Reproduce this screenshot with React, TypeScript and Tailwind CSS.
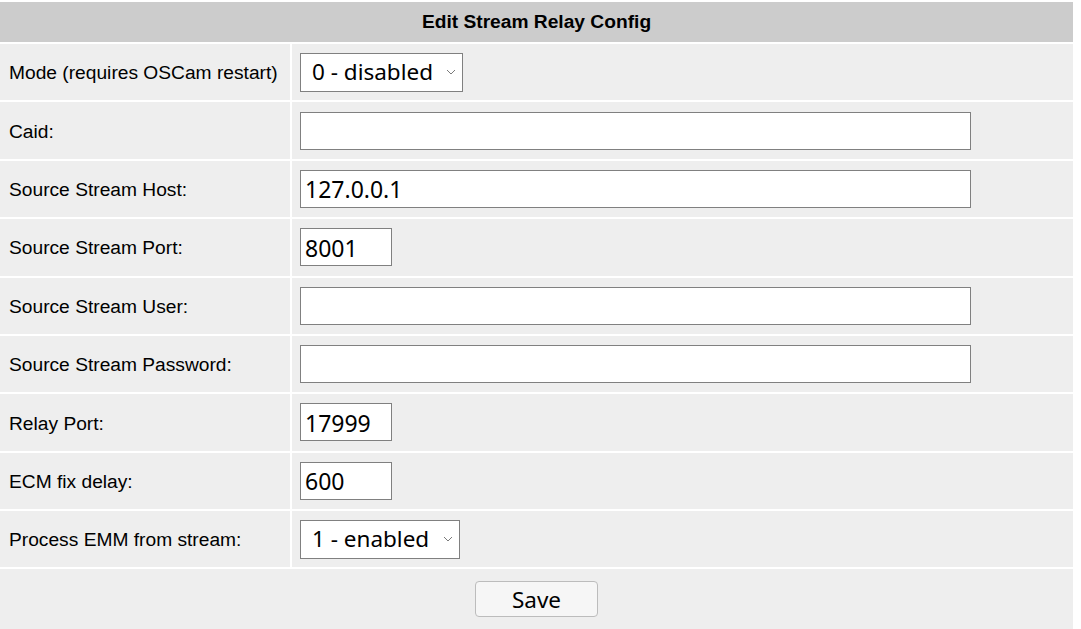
import React from "react";

const labelFont = { fontFamily: '"Liberation Sans", Arial, sans-serif' } as const;

function Chevron() {
  return (
    <svg
      className="pointer-events-none absolute right-[7px] top-1/2 -translate-y-1/2"
      width="10"
      height="6"
      viewBox="0 0 10 6"
      fill="none"
    >
      <path d="M1 1l4 4 4-4" stroke="#7a7a7a" strokeWidth="1" />
    </svg>
  );
}

function Select({ value, width }: { value: string; width: string }) {
  return (
    <div className={`relative ${width} h-[39px]`}>
      <div className="flex h-full w-full items-center border border-[#808080] bg-white pl-[11px] pt-[1px] text-[22.5px] text-black font-['Noto_Sans',sans-serif] leading-none">
        {value}
      </div>
      <Chevron />
    </div>
  );
}

function TextInput({ value, width }: { value: string; width: string }) {
  return (
    <input
      readOnly
      defaultValue={value}
      className={`${width} h-[38px] border border-[#808080] bg-white px-[4px] pt-[1px] text-[23px] text-black outline-none font-['Noto_Sans',sans-serif]`}
    />
  );
}

type Row = { label: string; control: React.ReactNode };

const rows: Row[] = [
  { label: "Mode (requires OSCam restart)", control: <Select value="0 - disabled" width="w-[163px]" /> },
  { label: "Caid:", control: <TextInput value="" width="w-[671px]" /> },
  { label: "Source Stream Host:", control: <TextInput value="127.0.0.1" width="w-[671px]" /> },
  { label: "Source Stream Port:", control: <TextInput value="8001" width="w-[92px]" /> },
  { label: "Source Stream User:", control: <TextInput value="" width="w-[671px]" /> },
  { label: "Source Stream Password:", control: <TextInput value="" width="w-[671px]" /> },
  { label: "Relay Port:", control: <TextInput value="17999" width="w-[92px]" /> },
  { label: "ECM fix delay:", control: <TextInput value="600" width="w-[92px]" /> },
  { label: "Process EMM from stream:", control: <Select value="1 - enabled" width="w-[160px]" /> },
];

export default function App() {
  return (
    <div className="min-h-[629px] w-[1081px] bg-white pt-[2px]" style={labelFont}>
      <div className="flex w-[1073px] flex-col gap-[2px]">
        <div className="flex h-[40px] items-center justify-center bg-[#cccccc] pt-[1px] text-[19.2px] font-bold text-black">
          Edit Stream Relay Config
        </div>
        {rows.map((r) => (
          <div key={r.label} className="grid h-[56.375px] grid-cols-[290px_1fr] gap-x-[2px]">
            <div className="flex items-center bg-[#eeeeee] pl-[9px] pt-[3px] text-[19.2px] text-black">{r.label}</div>
            <div className="flex items-center bg-[#eeeeee] pl-[8px]">{r.control}</div>
          </div>
        ))}
        <div className="flex h-[60px] items-center justify-center bg-[#eeeeee]">
          <button className="h-[36px] w-[123px] rounded-[4px] border border-[#bcbcbc] bg-[#f6f6f6] pt-[1px] text-[22.5px] text-black font-['Noto_Sans',sans-serif] leading-none">
            Save
          </button>
        </div>
      </div>
    </div>
  );
}
